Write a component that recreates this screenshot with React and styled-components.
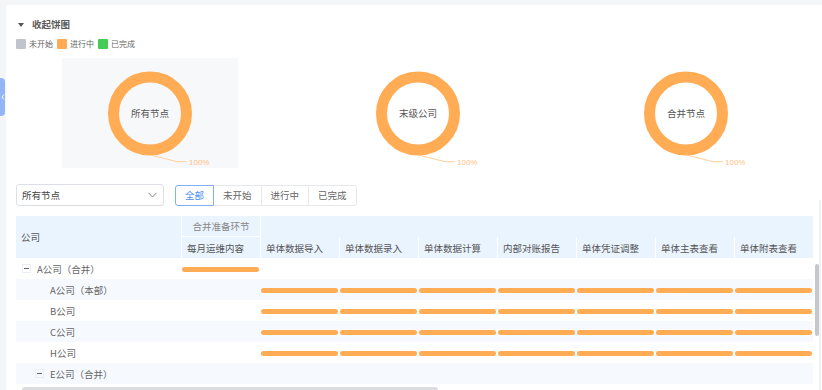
import React from 'react';
import styled, { createGlobalStyle } from 'styled-components';

const GlobalStyle = createGlobalStyle`
  html, body { margin: 0; padding: 0; background: #f4f5f7; overflow: hidden; }
  body { font-family: "Noto Sans CJK SC", "Noto Sans", sans-serif; }
  * { box-sizing: border-box; }
`;

const ORANGE = '#ffac55';

const Page = styled.div`
  position: relative;
  width: 822px;
  height: 390px;
  padding: 5px 0 0 6px;
  overflow: hidden;
`;

const SideTab = styled.div`
  position: absolute;
  left: 0;
  top: 78px;
  width: 5px;
  height: 38px;
  background: #93b4f6;
  border-radius: 0 4px 4px 0;
  display: flex;
  align-items: center;
  justify-content: center;
  z-index: 2;
`;

const Card = styled.div`
  background: #fff;
  height: 100%;
  padding: 12px 0 0 10px;
`;

const TitleRow = styled.div`
  display: flex;
  align-items: center;
  height: 15px;
  gap: 8px;
  padding-left: 2px;
`;

const Caret = styled.span`
  width: 0;
  height: 0;
  border-left: 3px solid transparent;
  border-right: 3px solid transparent;
  border-top: 4px solid #555;
`;

const Title = styled.span`
  font-size: 9.5px;
  font-weight: 700;
  color: #5a5a5a;
  line-height: 15px;
`;

const Legend = styled.div`
  display: flex;
  align-items: center;
  gap: 4px;
  margin-top: 7px;
  height: 10px;
`;

const LegendItem = styled.div`
  display: flex;
  align-items: center;
  gap: 3px;
  font-size: 8px;
  color: #666;
  line-height: 10px;
`;

const Swatch = styled.span`
  width: 10px;
  height: 10px;
  border-radius: 1px;
  background: ${p => p.$color};
`;

const ChartsRow = styled.div`
  display: grid;
  grid-template-columns: repeat(3, 268px);
  margin-top: 9px;
  height: 110px;
`;

const ChartCol = styled.div`
  display: flex;
  justify-content: center;
`;

const ChartPanel = styled.div`
  width: 176px;
  height: 110px;
  background: ${p => (p.$active ? '#f7f8fa' : 'transparent')};
`;

const Toolbar = styled.div`
  display: flex;
  align-items: center;
  gap: 11px;
  margin-top: 16px;
  height: 22px;
`;

const Select = styled.div`
  width: 148px;
  height: 22px;
  border: 1px solid #dcdfe6;
  border-radius: 3px;
  display: flex;
  align-items: center;
  justify-content: space-between;
  padding: 0 6px 0 5px;
  font-size: 9.5px;
  color: #444;
`;

const Segment = styled.div`
  display: flex;
  height: 21px;
`;

const SegButton = styled.div`
  height: 21px;
  padding: 0 9px;
  display: flex;
  align-items: center;
  font-size: 9.5px;
  color: ${p => (p.$active ? '#4a90f0' : '#666')};
  border: 1px solid ${p => (p.$active ? '#7fb0f5' : '#e6e8ec')};
  margin-left: -1px;
  position: relative;
  z-index: ${p => (p.$active ? 1 : 0)};
  &:first-child { border-radius: 3px 0 0 3px; margin-left: 0; }
  &:last-child { border-radius: 0 3px 3px 0; }
`;

const TableWrap = styled.div`
  position: relative;
  margin-top: 10px;
  width: 806px;
`;

const COLS = '165px repeat(8, 79px)';

const Header = styled.div`
  display: grid;
  grid-template-columns: ${COLS};
  grid-template-rows: 21px 21px;
  background: #eaf4fe;
  width: 797px;
`;

const HeadCell = styled.div`
  display: flex;
  align-items: center;
  justify-content: ${p => (p.$center ? 'center' : 'flex-start')};
  padding-left: ${p => (p.$center ? '0' : '5px')};
  font-size: 9.5px;
  color: ${p => (p.$muted ? '#888' : '#555')};
  white-space: nowrap;
  overflow: hidden;
  border-left: ${p => (p.$noLeft ? 'none' : '1px solid #fff')};
  border-bottom: ${p => (p.$bottom ? '1px solid #fff' : 'none')};
  grid-column: ${p => p.$col || 'auto'};
  grid-row: ${p => p.$row || 'auto'};
`;

const Row = styled.div`
  display: grid;
  grid-template-columns: ${COLS};
  height: 21px;
  width: 797px;
  background: ${p => (p.$striped ? '#f6faff' : '#fff')};
`;

const NameCell = styled.div`
  display: flex;
  align-items: center;
  padding-left: ${p => p.$indent}px;
  font-size: 9.5px;
  color: #666;
  white-space: nowrap;
  gap: 6px;
`;

const Toggle = styled.span`
  width: 9px;
  height: 9px;
  border: 1px solid #eceef2;
  display: flex;
  align-items: center;
  justify-content: center;
  &::after {
    content: '';
    width: 5px;
    height: 1px;
    background: #666;
  }
`;

const BarCell = styled.div`
  display: flex;
  align-items: center;
  padding: 1px 1px 0 1px;
`;

const Bar = styled.div`
  width: 100%;
  height: 5px;
  border-radius: 3px;
  background: ${ORANGE};
`;

const VScroll = styled.div`
  position: absolute;
  left: 799px;
  top: 48px;
  width: 4px;
  height: 72px;
  border-radius: 2px;
  background: #c6c7cb;
`;

const VTrack = styled.div`
  position: absolute;
  left: 803px;
  top: -16px;
  width: 2px;
  height: 200px;
  background: #f0f1f3;
`;

const HScroll = styled.div`
  margin: 3px 0 0 6px;
  width: 416px;
  height: 6px;
  border-radius: 3px;
  background: #dcdde0;
`;

function Donut({ label }) {
  const cx = 88;
  const cy = 55.5;
  return (
    <svg width="176" height="110" viewBox="0 0 176 110">
      <circle cx={cx} cy={cy} r="36.5" fill="none" stroke={ORANGE} strokeWidth="11" />
      <text
        x={cx}
        y={cy + 3.5}
        textAnchor="middle"
        fontSize="9.5"
        fill="#555"
        fontFamily='"Noto Sans CJK SC", sans-serif'
      >
        {label}
      </text>
      <polyline
        points="88.5,97 115,103.7 125,103.7"
        fill="none"
        stroke="#ffcf9c"
        strokeWidth="1"
      />
      <text x="127" y="106.5" fontSize="8" fill="#ffbf80" fontFamily='"Liberation Sans", sans-serif'>
        100%
      </text>
    </svg>
  );
}

const leafHeaders = [
  '每月运维内容',
  '单体数据导入',
  '单体数据录入',
  '单体数据计算',
  '内部对账报告',
  '单体凭证调整',
  '单体主表查看',
  '单体附表查看',
];

const rows = [
  { name: 'A公司（合并）', indent: 6, toggle: true, bars: [0] },
  { name: 'A公司（本部）', indent: 34, bars: [1, 2, 3, 4, 5, 6, 7] },
  { name: 'B公司', indent: 34, bars: [1, 2, 3, 4, 5, 6, 7] },
  { name: 'C公司', indent: 34, bars: [1, 2, 3, 4, 5, 6, 7] },
  { name: 'H公司', indent: 34, bars: [1, 2, 3, 4, 5, 6, 7] },
  { name: 'E公司（合并）', indent: 19, toggle: true, bars: [] },
];

export default function App() {
  return (
    <>
      <GlobalStyle />
      <Page>
        <SideTab>
          <svg width="4" height="6" viewBox="0 0 4 6">
            <polyline points="3,0.5 1,3 3,5.5" fill="none" stroke="#fff" strokeWidth="1" />
          </svg>
        </SideTab>
        <Card>
          <TitleRow>
            <Caret />
            <Title>收起饼图</Title>
          </TitleRow>
          <Legend>
            <LegendItem><Swatch $color="#c0c4cc" />未开始</LegendItem>
            <LegendItem><Swatch $color="#ffab53" />进行中</LegendItem>
            <LegendItem><Swatch $color="#45cc55" />已完成</LegendItem>
          </Legend>
          <ChartsRow>
            <ChartCol><ChartPanel $active><Donut label="所有节点" /></ChartPanel></ChartCol>
            <ChartCol><ChartPanel><Donut label="末级公司" /></ChartPanel></ChartCol>
            <ChartCol><ChartPanel><Donut label="合并节点" /></ChartPanel></ChartCol>
          </ChartsRow>
          <Toolbar>
            <Select>
              <span>所有节点</span>
              <svg width="9" height="6" viewBox="0 0 9 6">
                <polyline points="0.5,0.8 4.5,5 8.5,0.8" fill="none" stroke="#888" strokeWidth="1" />
              </svg>
            </Select>
            <Segment>
              <SegButton $active>全部</SegButton>
              <SegButton>未开始</SegButton>
              <SegButton>进行中</SegButton>
              <SegButton>已完成</SegButton>
            </Segment>
          </Toolbar>
          <TableWrap>
            <Header>
              <HeadCell $noLeft $col="1" $row="1 / 3">公司</HeadCell>
              <HeadCell $center $muted $bottom $col="2" $row="1">合并准备环节</HeadCell>
              <HeadCell $col="3 / 10" $row="1" />
              {leafHeaders.map((h, i) => (
                <HeadCell key={h} $col={String(i + 2)} $row="2">{h}</HeadCell>
              ))}
            </Header>
            {rows.map((r, ri) => (
              <Row key={r.name} $striped={ri % 2 === 1}>
                <NameCell $indent={r.indent}>
                  {r.toggle && <Toggle />}
                  <span>{r.name}</span>
                </NameCell>
                {leafHeaders.map((h, ci) => (
                  <BarCell key={h}>{r.bars.includes(ci) && <Bar />}</BarCell>
                ))}
              </Row>
            ))}
            <HScroll />
            <VTrack />
            <VScroll />
          </TableWrap>
        </Card>
      </Page>
    </>
  );
}
